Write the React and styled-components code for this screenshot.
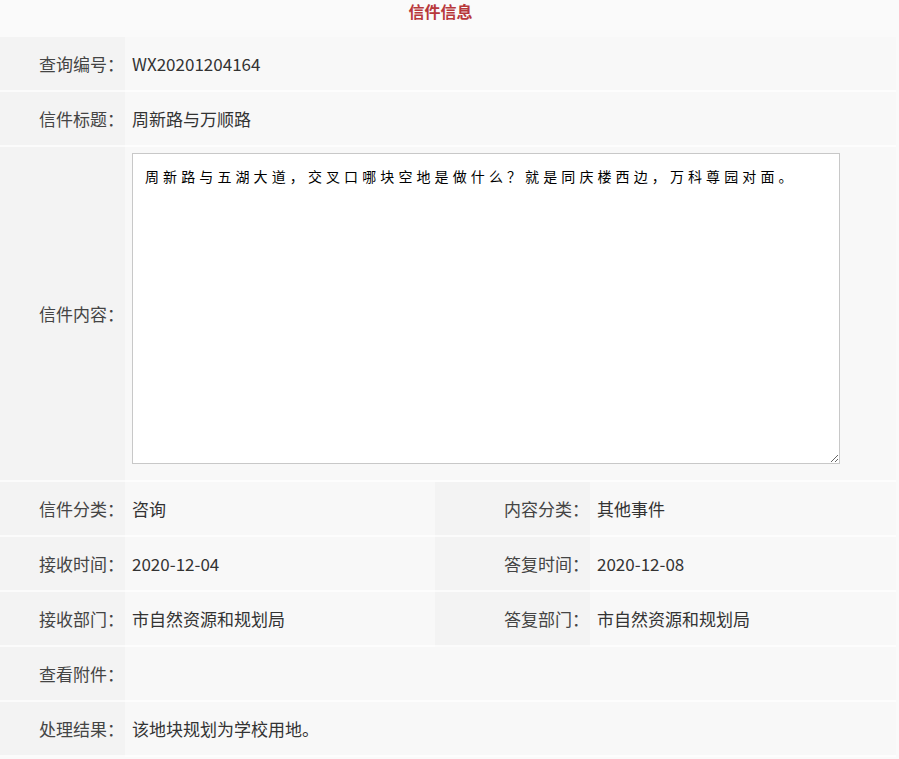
import React from "react";
import styled, { createGlobalStyle } from "styled-components";

const GlobalStyle = createGlobalStyle`
  html, body {
    margin: 0;
    padding: 0;
    background: #fafafa;
  }
  body {
    font-family: "Noto Sans CJK SC", "Noto Sans", sans-serif;
    color: #333;
  }
`;

const letterText =
  "周新路与五湖大道，交叉口哪块空地是做什么？就是同庆楼西边，万科尊园对面。";

const App = () => {
  return (
    <Page>
      <GlobalStyle />
      <Title>信件信息</Title>
      <Table>
        <Label>查询编号：</Label>
        <Value $span>WX20201204164</Value>

        <Label>信件标题：</Label>
        <Value $span>周新路与万顺路</Value>

        <Label>信件内容：</Label>
        <Value $span $top>
          <TextBox readOnly defaultValue={letterText} />
        </Value>

        <Label>信件分类：</Label>
        <Value>咨询</Value>
        <Label>内容分类：</Label>
        <Value>其他事件</Value>

        <Label>接收时间：</Label>
        <Value>2020-12-04</Value>
        <Label>答复时间：</Label>
        <Value>2020-12-08</Value>

        <Label>接收部门：</Label>
        <Value>市自然资源和规划局</Value>
        <Label>答复部门：</Label>
        <Value>市自然资源和规划局</Value>

        <Label>查看附件：</Label>
        <Value $span></Value>

        <Label>处理结果：</Label>
        <Value $span>该地块规划为学校用地。</Value>
      </Table>
    </Page>
  );
};

export default App;

const Page = styled.div`
  width: 899px;
  min-height: 759px;
  background: #fafafa;
`;

const Title = styled.div`
  height: 37px;
  line-height: 22px;
  text-align: center;
  padding-right: 18px;
  font-size: 16px;
  font-weight: 700;
  color: #b8383a;
`;

const Table = styled.div`
  width: 896px;
  display: grid;
  grid-template-columns: 125px 310px 155px 1fr;
  grid-template-rows: 55px 55px 335px repeat(5, 55px);
`;

const Label = styled.div`
  display: flex;
  align-items: center;
  justify-content: flex-end;
  padding-right: 1px;
  background: #f3f3f3;
  border-bottom: 2px solid #fbfbfb;
  font-size: 17px;
  color: #444;
  white-space: nowrap;
`;

const Value = styled.div`
  display: flex;
  align-items: ${(p) => (p.$top ? "flex-start" : "center")};
  padding-left: 7px;
  padding-top: ${(p) => (p.$top ? "6px" : "0")};
  background: #f8f8f8;
  border-bottom: 2px solid #fdfdfd;
  font-size: 17px;
  color: #333;
  ${(p) => p.$span && "grid-column: span 3;"}
`;

const TextBox = styled.textarea`
  width: 708px;
  height: 311px;
  box-sizing: border-box;
  border: 1px solid #c8c8c8;
  background: #fff;
  padding: 12px 12px;
  font-family: "Noto Sans CJK SC", sans-serif;
  font-size: 14px;
  font-weight: 400;
  letter-spacing: 4.1px;
  line-height: 20px;
  color: #000;
  resize: both;
  outline: none;
`;
